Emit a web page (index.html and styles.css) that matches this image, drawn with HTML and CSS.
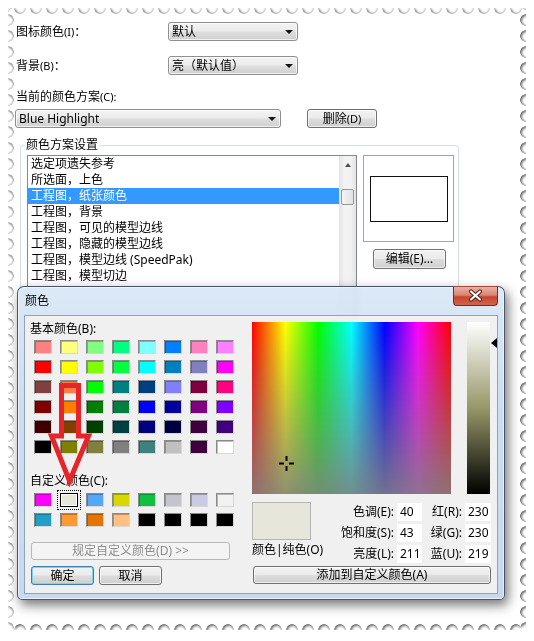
FILE: index.html
```html
<!DOCTYPE html>
<html lang="zh-CN">
<head>
<meta charset="UTF-8">
<title>颜色方案设置</title>
<link rel="stylesheet" href="styles.css">
</head>
<body>

<div class="frame">
  <div class="stamp">

    <div class="opts">
      <span class="lbl">图标颜色<span class="key">(I)</span>：</span>
      <div class="combo">默认</div>
      <span class="lbl">背景<span class="key">(B)</span>：</span>
      <div class="combo">亮（默认值）</div>
    </div>

    <div class="scheme-lbl">当前的颜色方案<span class="key">(C):</span></div>
    <div class="scheme-row">
      <div class="combo combo-long">Blue Highlight</div>
      <button class="btn btn-del">删除<span class="key">(D)</span></button>
    </div>

    <div class="group">
      <span class="group-title">颜色方案设置</span>
      <div class="group-body">
        <div class="list">
          <ul class="items">
            <li>选定项遗失参考</li>
            <li>所选面，上色</li>
            <li class="sel">工程图，纸张颜色</li>
            <li>工程图，背景</li>
            <li>工程图，可见的模型边线</li>
            <li>工程图，隐藏的模型边线</li>
            <li>工程图，模型边线 (SpeedPak)</li>
            <li>工程图，模型切边</li>
          </ul>
          <div class="vscroll">
            <span class="up"></span>
            <span class="thumb"></span>
          </div>
        </div>
        <div class="side">
          <div class="preview"><div class="sample"></div></div>
          <button class="btn btn-edit">编辑(E)...</button>
        </div>
      </div>
    </div>

    <!-- 颜色 dialog, floats over the options window -->
    <div class="dlg">
      <div class="dlg-title">颜色</div>
      <span class="dlg-close">
        <svg width="45" height="19" viewBox="0 0 45 19">
          <path d="M18 5.5l9 8M27 5.5l-9 8" stroke="#5a1d14" stroke-width="4.2" stroke-linecap="round"/>
          <path d="M18 5.5l9 8M27 5.5l-9 8" stroke="#fff" stroke-width="2.2" stroke-linecap="round"/>
        </svg>
      </span>

      <div class="dlg-client">
        <div class="col-left">
          <div class="dl">基本颜色(B):</div>
          <div class="swatches" id="basic"></div>
          <div class="dl custom-lbl">自定义颜色(C):</div>
          <div class="swatches custom" id="custom"></div>
          <button class="btn btn-define" disabled>规定自定义颜色(D) &gt;&gt;</button>
          <div class="dlg-actions">
            <button class="btn btn-ok">确定</button>
            <button class="btn">取消</button>
          </div>
        </div>

        <div class="col-right">
          <div class="pickers">
            <div class="spectrum">
              <svg class="cross" width="15" height="15" viewBox="0 0 15 15">
                <path d="M0 6.5h5v2H0zM10 6.5h5v2h-5zM6.5 0h2v5h-2zM6.5 10h2v5h-2z" fill="#000"/>
              </svg>
            </div>
            <div class="lum"></div>
          </div>

          <div class="values">
            <div class="current">
              <div class="cur-swatch"></div>
              <div class="cur-lbl">颜色|纯色(O)</div>
            </div>
            <div class="fields">
              <span>色调(E):</span><span class="num">40</span>
              <span>红(R):</span><span class="num">230</span>
              <span>饱和度(S):</span><span class="num">43</span>
              <span>绿(G):</span><span class="num">230</span>
              <span>亮度(L):</span><span class="num">211</span>
              <span>蓝(U):</span><span class="num">219</span>
            </div>
          </div>

          <button class="btn btn-add">添加到自定义颜色(A)</button>
        </div>
      </div>
    </div>

    <svg class="mark" width="52" height="114" viewBox="44 378 52 114">
      <path d="M61.5 385.5H78.5V436H88.5L69.5 481L51.5 436H61.5Z" fill="none" stroke="#e5252a" stroke-width="5"/>
    </svg>

  </div>
</div>

<script>
  const basicColors = [
    '#ff8080', '#ffff80', '#80ff80', '#00ff80', '#80ffff', '#0080ff', '#ff80c0', '#ff80ff',
    '#ff0000', '#ffff00', '#80ff00', '#00ff40', '#00ffff', '#0080c0', '#8080c0', '#ff00ff',
    '#804040', '#ff8040', '#00ff00', '#008080', '#004080', '#8080ff', '#800040', '#ff0080',
    '#800000', '#ff8000', '#008000', '#008040', '#0000ff', '#0000a0', '#800080', '#8000ff',
    '#400000', '#804000', '#004000', '#004040', '#000080', '#000040', '#400040', '#400080',
    '#000000', '#808000', '#808040', '#808080', '#408080', '#c0c0c0', '#400040', '#ffffff'
  ];

  const customColors = [
    '#ff00ff', '#e6e6db', '#55a8f8', '#d8d800', '#10c040', '#c4c4cc', '#cacae2', '#f2f2f2',
    '#20a0c8', '#ff9933', '#e87400', '#ffc080', '#000000', '#000000', '#000000', '#000000'
  ];

  function fillSwatches(id, colors, current) {
    const box = document.getElementById(id);
    colors.forEach((color, i) => {
      const s = document.createElement('span');
      s.className = i === current ? 'swatch current' : 'swatch';
      s.style.background = color;
      box.appendChild(s);
    });
  }

  fillSwatches('basic', basicColors, -1);
  fillSwatches('custom', customColors, 1);
</script>

</body>
</html>
```

FILE: styles.css
```css
body {
  margin: 8px;
  background: #fff;
  font: 12px/14px "Noto Sans", "Noto Sans CJK SC", sans-serif;
  color: #000;
}

/* perforated paper edge */
.frame {
  width: 518px;
  height: 622px;
  filter: drop-shadow(1px 1px 1.5px rgba(0,0,0,0.55)) drop-shadow(0 0 1.2px rgba(0,0,0,0.4));
}

.stamp {
  position: relative;
  height: 100%;
  box-sizing: border-box;
  padding: 14px 8px 0;
  background: #fff;
  overflow: hidden;
  -webkit-mask-image:
    radial-gradient(circle 5.5px at 50% 0, transparent 5.5px, #000 6px),
    radial-gradient(circle 5.5px at 50% 100%, transparent 5.5px, #000 6px),
    radial-gradient(circle 5.5px at 0 50%, transparent 5.5px, #000 6px),
    radial-gradient(circle 5.5px at 100% 50%, transparent 5.5px, #000 6px);
  -webkit-mask-size: 16px 100%, 16px 100%, 100% 16px, 100% 16px;
  -webkit-mask-repeat: repeat-x, repeat-x, repeat-y, repeat-y;
  -webkit-mask-position: 4px 0, 4px 0, 0 4px, 0 4px;
  -webkit-mask-composite: source-in;
  mask-composite: intersect;
}

.key {
  font-size: 11px;
}

/* top options */
.opts {
  display: grid;
  grid-template-columns: 152px 130px;
  grid-auto-rows: 19px;
  row-gap: 15px;
  align-items: center;
}

.combo {
  display: flex;
  align-items: center;
  justify-content: space-between;
  height: 19px;
  box-sizing: border-box;
  padding: 0 4px 0 3px;
  border: 1px solid #8e8f8f;
  border-radius: 3px;
  background: linear-gradient(#f3f3f3, #ebebeb 48%, #dedede 52%, #d0d0d0);
  box-shadow: inset 0 0 0 1px rgba(255,255,255,0.7);
}

.combo::after {
  content: "";
  border-left: 4px solid transparent;
  border-right: 4px solid transparent;
  border-top: 4px solid #111;
}

.scheme-lbl {
  margin-top: 15px;
}

.scheme-row {
  display: flex;
  margin-top: 5px;
}

.combo-long {
  width: 266px;
  margin-left: -1px;
}

.btn {
  height: 19px;
  box-sizing: border-box;
  padding: 0;
  border: 1px solid #707070;
  border-radius: 3px;
  background: linear-gradient(#f2f2f2, #ebebeb 48%, #dddddd 52%, #cfcfcf);
  box-shadow: inset 0 0 0 1px rgba(255,255,255,0.65);
  font: inherit;
  color: #000;
}

.btn-del {
  width: 70px;
  margin-left: 26px;
}

/* group box */
.group {
  width: 439px;
  height: 230px;
  box-sizing: border-box;
  margin: 17px 0 0 4px;
  padding-left: 6px;
  border: 1px solid #d5dfe5;
  border-radius: 3px;
}

.group-title {
  display: block;
  width: max-content;
  margin: -8px 0 0 -2px;
  padding: 0 1px;
  background: #fff;
}

.group-body {
  display: flex;
  gap: 6px;
  margin-top: 3px;
}

.list {
  display: flex;
  width: 330px;
  height: 200px;
  box-sizing: border-box;
  border: 1px solid #828790;
  background: #fff;
}

.items {
  flex: 1;
  margin: 0;
  padding: 0;
  list-style: none;
}

.items li {
  height: 16px;
  line-height: 16px;
  padding-left: 3px;
  white-space: nowrap;
}

.items li.sel {
  background: #3399ff;
  color: #fff;
}

.vscroll {
  display: flex;
  flex-direction: column;
  align-items: center;
  width: 17px;
  background: linear-gradient(90deg, #e3e3e3, #f2f2f2 30%, #f2f2f2 70%, #e3e3e3);
}

.vscroll .up {
  margin-top: 7px;
  border-left: 3.5px solid transparent;
  border-right: 3.5px solid transparent;
  border-bottom: 4px solid #4d4d4d;
}

.vscroll .thumb {
  width: 13px;
  height: 16px;
  box-sizing: border-box;
  margin-top: 22px;
  border: 1px solid #979797;
  border-radius: 2px;
  background: linear-gradient(90deg, #f4f4f4, #e2e2e2);
}

.side {
  width: 91px;
}

.preview {
  display: flex;
  align-items: center;
  justify-content: center;
  height: 87px;
  box-sizing: border-box;
  border: 1px solid #a5a5a5;
}

.sample {
  width: 78px;
  height: 46px;
  box-sizing: border-box;
  border: 1.5px solid #111;
}

.btn-edit {
  width: 73px;
  height: 20px;
  margin: 7px 0 0 10px;
}

/* colour dialog window */
.dlg {
  position: absolute;
  left: 9px;
  top: 278px;
  display: flex;
  flex-direction: column;
  width: 488px;
  height: 314px;
  box-sizing: border-box;
  padding: 0 6px 5px;
  border: 1px solid rgba(40,50,70,0.8);
  border-radius: 7px 7px 5px 5px;
  background: linear-gradient(rgba(214,229,245,0.86), rgba(196,216,240,0.86) 40%, rgba(190,212,238,0.88));
  backdrop-filter: blur(2.5px);
  box-shadow: 3px 5px 12px rgba(0,0,0,0.55), inset 0 0 0 1px rgba(255,255,255,0.6);
}

.dlg-title {
  height: 28px;
  line-height: 28px;
  padding-left: 1px;
}

.dlg-close {
  position: absolute;
  top: -1px;
  right: 6px;
  width: 45px;
  height: 20px;
  box-sizing: border-box;
  border: 1px solid #7a2a1e;
  border-top-color: #a04a3a;
  border-radius: 0 0 4px 4px;
  background: linear-gradient(#eab0a3, #d98672 45%, #c7452e 55%, #d0654c);
}

.dlg-close svg {
  display: block;
  margin: -1px 0 0 -1px;
}

.dlg-client {
  display: flex;
  flex: 1;
  padding-left: 5px;
  border: 1px solid #8fa3b9;
  background: #f0f0f0;
}

.col-left {
  width: 200px;
}

.dl {
  margin-top: 6px;
}

.swatches {
  display: grid;
  grid-template-columns: repeat(8, 18px);
  grid-auto-rows: 14px;
  column-gap: 8px;
  row-gap: 6px;
  margin-top: 4px;
  padding-left: 4px;
}

.swatch {
  box-sizing: border-box;
  border: 1px solid;
  border-color: #8a8a8a #d8d8d8 #d8d8d8 #8a8a8a;
  box-shadow: inset 1px 1px 0 rgba(0,0,0,0.25);
}

.swatch.current {
  border: 1px solid #000;
  box-shadow: inset 0 0 0 1px #fff;
  outline: 1px dotted #000;
  outline-offset: 2px;
}

.custom-lbl {
  margin-top: 20px;
}

.swatches.custom {
  margin-top: 5px;
}

.btn-define {
  width: 199px;
  height: 18px;
  margin: 15px 0 0 1px;
  border-color: #b5b9bc;
  background: #f4f4f4;
  box-shadow: none;
  color: #8c8c8c;
}

.dlg-actions {
  display: flex;
  gap: 5px;
  margin: 6px 0 0 1px;
}

.dlg-actions .btn {
  width: 63px;
}

.btn-ok {
  border-color: #3c7fb1;
  box-shadow: inset 0 0 0 1px #7fd1f5;
}

.col-right {
  width: 239px;
  margin-left: 22px;
}

.pickers {
  display: flex;
  margin-top: 6px;
}

.spectrum {
  position: relative;
  width: 199px;
  height: 172px;
  background:
    linear-gradient(rgba(128,128,128,0), rgba(128,128,128,0.88)),
    linear-gradient(90deg, #ff0000, #ffff00 16.67%, #00ff00 33.33%, #00ffff 50%, #0000ff 66.67%, #ff00ff 83.33%, #ff0000);
}

.cross {
  position: absolute;
  left: 27px;
  top: 134px;
}

.lum {
  position: relative;
  width: 23px;
  height: 172px;
  margin-left: 16px;
  background: linear-gradient(#ffffff, #979769 50%, #000000);
}

.lum::after {
  content: "";
  position: absolute;
  left: 24px;
  top: 16px;
  border-top: 5px solid transparent;
  border-bottom: 5px solid transparent;
  border-right: 6px solid #000;
}

.values {
  display: flex;
  justify-content: space-between;
  margin-top: 8px;
}

.cur-swatch {
  width: 59px;
  height: 38px;
  box-sizing: border-box;
  border: 1px solid #b4b4b4;
  background: #e6e6db;
}

.cur-lbl {
  margin-top: 3px;
}

.fields {
  display: grid;
  grid-template-columns: auto 25px 37px 26px;
  grid-auto-rows: 18px;
  column-gap: 3px;
  row-gap: 3px;
  align-items: center;
  margin-top: 1px;
  text-align: right;
}

.fields .num {
  height: 18px;
  line-height: 18px;
  padding-left: 3px;
  background: #fff;
  text-align: left;
}

.btn-add {
  width: 238px;
  height: 18px;
  margin: 3px 0 0 1px;
}

/* red pointer drawn over the swatches */
.mark {
  position: absolute;
  left: 36px;
  top: 370px;
}
```
